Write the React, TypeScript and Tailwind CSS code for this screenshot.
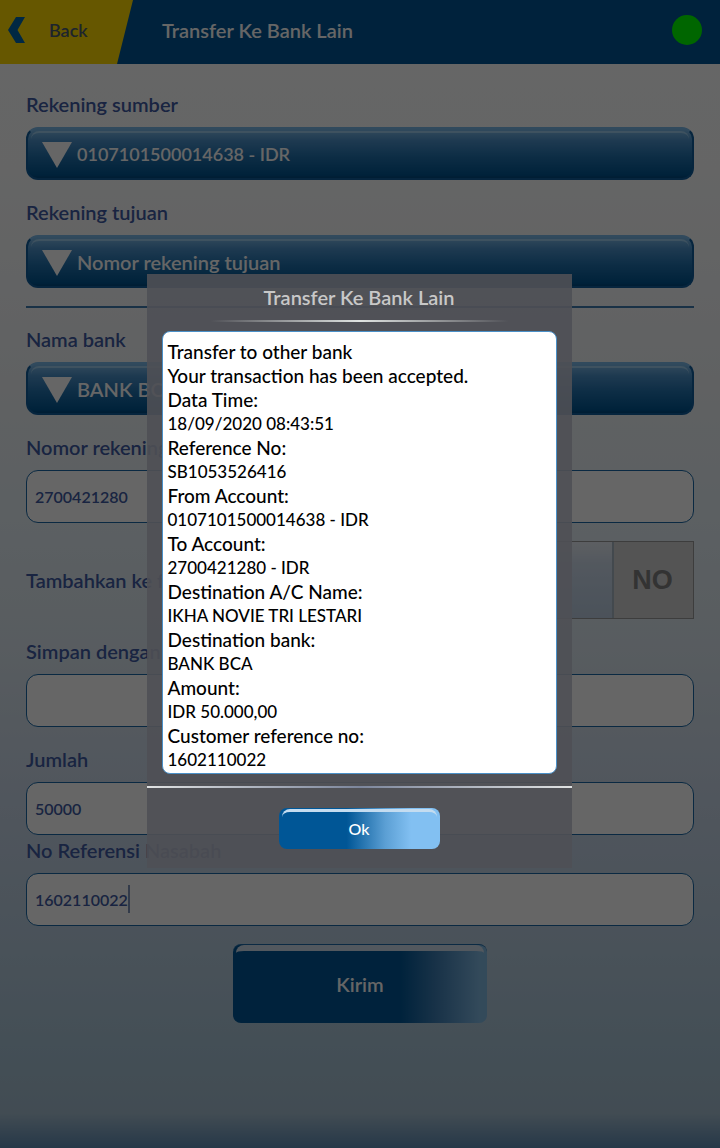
import React, { useState } from 'react';

const receipt = [
  { label: 'Transfer to other bank' },
  { label: 'Your transaction has been accepted.' },
  { label: 'Data Time:', value: '18/09/2020 08:43:51' },
  { label: 'Reference No:', value: 'SB1053526416' },
  { label: 'From Account:', value: '0107101500014638 - IDR' },
  { label: 'To Account:', value: '2700421280 - IDR' },
  { label: 'Destination A/C Name:', value: 'IKHA NOVIE TRI LESTARI' },
  { label: 'Destination bank:', value: 'BANK BCA' },
  { label: 'Amount:', value: 'IDR 50.000,00' },
  { label: 'Customer reference no:', value: '1602110022' },
];

const labelClass = 'block h-7 text-xl leading-7 font-semibold text-[#3f5ba3]';

function SelectField({ id, label, value, numeric }: { id: string; label: string; value: string; numeric?: boolean }) {
  return (
    <div className="pt-[18px]">
      <label htmlFor={id} className={labelClass}>{label}</label>
      <div className="relative mt-[9px] before:pointer-events-none before:absolute before:inset-x-[5px] before:top-1 before:h-3 before:rounded-t-lg before:border-t-2 before:border-[#afd8f5]/70">
        <select
          id={id}
          className={
            'block h-[53px] w-full appearance-none rounded-xl border-2 border-[#0f5c9c] border-t-[#7ab8e8] bg-[linear-gradient(180deg,#7ab8e8_0px,#6aa9da_5px,#4a90c8_12px,#2170ac_28px,#005591_46px,#00497f_100%)] pl-[49px] font-semibold text-white ' +
            (numeric ? 'text-lg' : 'text-xl')
          }
        >
          <option>{value}</option>
        </select>
        <svg viewBox="0 0 30 26" className="pointer-events-none absolute top-[15px] left-4 h-[26px] w-[30px]" aria-hidden="true">
          <path d="M0 0H30L15 26Z" fill="#fff" />
        </svg>
      </div>
    </div>
  );
}

function TextField({ id, label, value, tight, caret }: { id: string; label: string; value: string; tight?: boolean; caret?: boolean }) {
  return (
    <div className={tight ? 'pt-px' : 'pt-[18px]'}>
      <label htmlFor={id} className={labelClass}>{label}</label>
      <div className="relative mt-[9px]">
        <input
          id={id}
          defaultValue={value}
          className="block h-[53px] w-full rounded-xl border border-[#1a68a5] bg-white px-2 text-base font-semibold text-[#3f5ba3]"
        />
        {caret && <span className="absolute top-3 left-[102px] h-7 w-0.5 bg-[#7f93b8]" />}
      </div>
    </div>
  );
}

export default function App() {
  const [favorite, setFavorite] = useState(false);
  return (
    <div className="relative min-h-screen bg-[linear-gradient(180deg,#ffffff_0%,#fcfdfd_15%,#f0f3f6_33%,#e6f0f6_44%,#dce7ef_56%,#c8d6e8_70%,#b9cee0_81%,#aac5d7_91%,#a5bed0_97%,#5f8cb4_100%)] font-[Lato,'Open_Sans',sans-serif]">
      <header className="flex h-16 items-center bg-[#005696]">
        <button className="flex h-16 w-[133px] items-center bg-[#ffd900] pb-1 pl-2 text-lg font-semibold text-[#4a5a70] [clip-path:polygon(0_0,100%_0,88%_100%,0_100%)]">
          <svg viewBox="0 0 17 26" className="mr-6 h-[26px] w-[17px] shrink-0" aria-hidden="true">
            <path d="M8 0H17L9.500 13L17 26H8L0 13Z" fill="#0064a8" />
          </svg>
          Back
        </button>
        <h1 className="ml-[29px] flex-1 pb-1 text-xl font-semibold text-white">Transfer Ke Bank Lain</h1>
        <span className="mr-[18px] mb-1 size-[30px] rounded-full bg-[#00ff00]" />
      </header>

      <main className="px-[26px] pt-2">
        <SelectField id="source" label="Rekening sumber" value="0107101500014638 - IDR" numeric />
        <SelectField id="target" label="Rekening tujuan" value="Nomor rekening tujuan" />
        <hr className="mt-[18px] -mb-px h-0.5 border-0 bg-[#3f7cae]" />
        <SelectField id="bank" label="Nama bank" value="BANK BCA" />
        <TextField id="number" label="Nomor rekening tujuan" value="2700421280" />
        <div className="mt-[18px] flex h-[78px] items-center justify-between">
          <label htmlFor="favorite" className={labelClass}>Tambahkan ke favorit</label>
          <label className="flex h-full cursor-pointer border border-[#9a9a9a] bg-[#d2d2d2]">
            <input
              id="favorite"
              type="checkbox"
              checked={favorite}
              onChange={(e) => setFavorite(e.target.checked)}
              className="sr-only"
            />
            <span className="w-20 border-r-2 border-[#a9b6c4] bg-[linear-gradient(180deg,#e6ecf4_0%,#e0e8f2_10%,#cfdcec_28%,#c2d3e6_70%,#bccde0_100%)]" />
            <span className="grid w-[79px] place-items-center pr-0.5 font-['Liberation_Sans',sans-serif] text-[27px] font-bold text-[#808080]">NO</span>
          </label>
        </div>
        <TextField id="alias" label="Simpan dengan nama" value="" />
        <TextField id="amount" label="Jumlah" value="50000" />
        <TextField id="reference" label="No Referensi Nasabah" value="1602110022" tight caret />
        <button className="relative mx-auto mt-[18px] mb-6 block h-[79px] w-[254px] rounded-lg border-t border-[#1c6aa8] bg-[linear-gradient(90deg,#005696_0%,#005696_66%,#3e7eb4_80%,#80b8e2_97%)] text-xl font-semibold text-white before:absolute before:inset-x-[3px] before:top-0 before:h-3 before:rounded-t-lg before:border-t-[6px] before:border-[#ccdcec]">
          Kirim
        </button>
      </main>

      <div className="absolute inset-0 flex items-center justify-center bg-black/60 pr-0.5 pb-1.5">
        <section role="dialog" aria-labelledby="dialog-title" className="w-[425px] max-w-full bg-[#4f5055]/90 pb-[19px]">
          <h2 id="dialog-title" className="pt-[9px] pb-[9px] text-center text-xl leading-7 font-semibold text-[#c8c8c8]">Transfer Ke Bank Lain</h2>
          <div className="h-0.5 bg-[linear-gradient(90deg,transparent_15%,#e0e4e2_50%,transparent_85%)]" />
          <div className="mx-[15px] mt-[9px] rounded-lg border border-[#4a90c8] bg-white px-[5px] pt-2 pb-px font-medium text-black">
            {receipt.map(({ label, value }) => (
              <React.Fragment key={label}>
                <p className="text-[19px] leading-6">{label}</p>
                {value && <p className="text-[17px] leading-6">{value}</p>}
              </React.Fragment>
            ))}
          </div>
          <div className="mt-3 h-0.5 bg-[linear-gradient(90deg,#e0e2e2,#7c869c_50%,#e0e2e2)]" />
          <button className="relative mx-auto mt-5 block h-[41px] w-[161px] rounded-lg bg-[linear-gradient(90deg,#005696_0%,#005696_42%,#5b9fd4_66%,#82c0f2_82%,#82c0f2_100%)] text-base font-medium text-white before:absolute before:inset-x-[3px] before:top-px before:h-3 before:rounded-t-lg before:border-t-[3px] before:border-[#c4dcf0]">
            Ok
          </button>
        </section>
      </div>
    </div>
  );
}
